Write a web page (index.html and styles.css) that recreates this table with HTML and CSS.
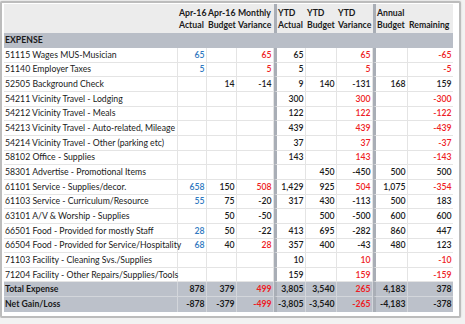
FILE: index.html
```html
<!DOCTYPE html>
<html lang="en">
<head>
    <meta charset="UTF-8">
    <meta name="viewport" content="width=device-width, initial-scale=1.0">
    <title>Expense Report</title>
    <link rel="stylesheet" href="styles.css">
</head>
<body>
    <div class="frame">
        <table class="report">
            <colgroup>
                <col class="w-label">
                <col class="w-c1">
                <col class="w-c2">
                <col class="w-c3">
                <col class="w-c4">
                <col class="w-c5">
                <col class="w-c6">
                <col class="w-c7">
                <col class="w-c8">
            </colgroup>
            <thead>
                <tr>
                    <th></th>
                    <th>Apr-16<br>Actual</th>
                    <th>Apr-16<br>Budget</th>
                    <th>Monthly<br>Variance</th>
                    <th class="sep">YTD<br>Actual</th>
                    <th>YTD<br>Budget</th>
                    <th>YTD<br>Variance</th>
                    <th class="sep">Annual<br>Budget</th>
                    <th>&nbsp;<br>Remaining</th>
                </tr>
            </thead>
            <tbody>
                <tr class="section">
                    <td>EXPENSE</td>
                    <td></td><td></td><td></td>
                    <td class="sep"></td><td></td><td></td>
                    <td class="sep"></td><td></td>
                </tr>
                <tr>
                    <td>51115 Wages MUS-Musician</td>
                    <td class="blue">65</td><td></td><td class="red">65</td>
                    <td class="sep">65</td><td></td><td class="red">65</td>
                    <td class="sep"></td><td class="red">-65</td>
                </tr>
                <tr>
                    <td>51140 Employer Taxes</td>
                    <td class="blue">5</td><td></td><td class="red">5</td>
                    <td class="sep">5</td><td></td><td class="red">5</td>
                    <td class="sep"></td><td class="red">-5</td>
                </tr>
                <tr>
                    <td>52505 Background Check</td>
                    <td></td><td>14</td><td>-14</td>
                    <td class="sep">9</td><td>140</td><td>-131</td>
                    <td class="sep">168</td><td>159</td>
                </tr>
                <tr>
                    <td>54211 Vicinity Travel - Lodging</td>
                    <td></td><td></td><td></td>
                    <td class="sep">300</td><td></td><td class="red">300</td>
                    <td class="sep"></td><td class="red">-300</td>
                </tr>
                <tr>
                    <td>54212 Vicinity Travel - Meals</td>
                    <td></td><td></td><td></td>
                    <td class="sep">122</td><td></td><td class="red">122</td>
                    <td class="sep"></td><td class="red">-122</td>
                </tr>
                <tr>
                    <td>54213 Vicinity Travel - Auto-related, Mileage</td>
                    <td></td><td></td><td></td>
                    <td class="sep">439</td><td></td><td class="red">439</td>
                    <td class="sep"></td><td class="red">-439</td>
                </tr>
                <tr>
                    <td>54214 Vicinity Travel - Other (parking etc)</td>
                    <td></td><td></td><td></td>
                    <td class="sep">37</td><td></td><td class="red">37</td>
                    <td class="sep"></td><td class="red">-37</td>
                </tr>
                <tr>
                    <td>58102 Office - Supplies</td>
                    <td></td><td></td><td></td>
                    <td class="sep">143</td><td></td><td class="red">143</td>
                    <td class="sep"></td><td class="red">-143</td>
                </tr>
                <tr>
                    <td>58301 Advertise - Promotional Items</td>
                    <td></td><td></td><td></td>
                    <td class="sep"></td><td>450</td><td>-450</td>
                    <td class="sep">500</td><td>500</td>
                </tr>
                <tr>
                    <td>61101 Service - Supplies/decor.</td>
                    <td class="blue">658</td><td>150</td><td class="red">508</td>
                    <td class="sep">1,429</td><td>925</td><td class="red">504</td>
                    <td class="sep">1,075</td><td class="red">-354</td>
                </tr>
                <tr>
                    <td>61103 Service - Curriculum/Resource</td>
                    <td class="blue">55</td><td>75</td><td>-20</td>
                    <td class="sep">317</td><td>430</td><td>-113</td>
                    <td class="sep">500</td><td>183</td>
                </tr>
                <tr>
                    <td>63101 A/V &amp; Worship - Supplies</td>
                    <td></td><td>50</td><td>-50</td>
                    <td class="sep"></td><td>500</td><td>-500</td>
                    <td class="sep">600</td><td>600</td>
                </tr>
                <tr>
                    <td>66501 Food - Provided for mostly Staff</td>
                    <td class="blue">28</td><td>50</td><td>-22</td>
                    <td class="sep">413</td><td>695</td><td>-282</td>
                    <td class="sep">860</td><td>447</td>
                </tr>
                <tr>
                    <td>66504 Food - Provided for Service/Hospitality</td>
                    <td class="blue">68</td><td>40</td><td class="red">28</td>
                    <td class="sep">357</td><td>400</td><td>-43</td>
                    <td class="sep">480</td><td>123</td>
                </tr>
                <tr>
                    <td>71103 Facility - Cleaning Svs./Supplies</td>
                    <td></td><td></td><td></td>
                    <td class="sep">10</td><td></td><td class="red">10</td>
                    <td class="sep"></td><td class="red">-10</td>
                </tr>
                <tr>
                    <td>71204 Facility - Other Repairs/Supplies/Tools</td>
                    <td></td><td></td><td></td>
                    <td class="sep">159</td><td></td><td class="red">159</td>
                    <td class="sep"></td><td class="red">-159</td>
                </tr>
            </tbody>
            <tfoot>
                <tr>
                    <td>Total Expense</td>
                    <td>878</td><td>379</td><td class="red">499</td>
                    <td class="sep">3,805</td><td>3,540</td><td class="red">265</td>
                    <td class="sep">4,183</td><td>378</td>
                </tr>
                <tr>
                    <td>Net Gain/Loss</td>
                    <td>-878</td><td>-379</td><td class="red">-499</td>
                    <td class="sep">-3,805</td><td>-3,540</td><td class="red">-265</td>
                    <td class="sep">-4,183</td><td>-378</td>
                </tr>
            </tfoot>
        </table>
    </div>
</body>
</html>
```

FILE: styles.css
```css
* {
    box-sizing: border-box;
}

body {
    margin: 0;
    background-color: #f2f2f2;
    font-family: Lato, "Liberation Sans", sans-serif;
    font-size: 8.7px;
    color: #1a1a1a;
}

.frame {
    width: 461px;
    margin-top: 1px;
    padding: 1px 6px 4px 2px;
    background-color: #fff;
    border: 2px solid #bcbcbc;
    border-radius: 2px;
    box-shadow: 0 0 2px rgba(0,0,0,0.15);
}

.report {
    width: 449px;
    table-layout: fixed;
    border-collapse: separate;
    border-spacing: 0;
}

.w-label { width: 174px; }
.w-c1 { width: 29px; }
.w-c2 { width: 30px; }
.w-c3 { width: 37px; }
.w-c4 { width: 32px; }
.w-c5 { width: 31px; }
.w-c6 { width: 36px; }
.w-c7 { width: 35px; }
.w-c8 { width: 45px; }

.report th {
    height: 29.33px;
    padding: 0 0 0 1px;
    background-color: #ececec;
    font-weight: bold;
    text-align: left;
    line-height: 12px;
    vertical-align: middle;
    white-space: nowrap;
}

.report td {
    height: 14.67px;
    padding: 0 1.5px 0 1px;
    border-right: 1px solid #e4e4e4;
    border-bottom: 1px solid #e4e4e4;
    text-align: right;
    font-weight: 600;
    line-height: 12px;
    vertical-align: middle;
    white-space: nowrap;
}

.report td:first-child {
    text-align: left;
    font-weight: normal;
}

.report td:last-child {
    border-right: none;
}

.report .sep {
    border-left: 3px solid #a9aeb6;
}

.report .section td {
    background-color: #b9bec7;
    border-color: #b9bec7;
    font-weight: bold;
}

.report tfoot td {
    background-color: #bcc1ca;
    border-color: #d3d6db;
    font-weight: bold;
}

.report tfoot td:first-child {
    font-weight: bold;
}

.report tfoot tr:last-child td {
    border-bottom: none;
}

.blue {
    color: #2f78c0;
}

.red {
    color: #ee1c24;
}
```
